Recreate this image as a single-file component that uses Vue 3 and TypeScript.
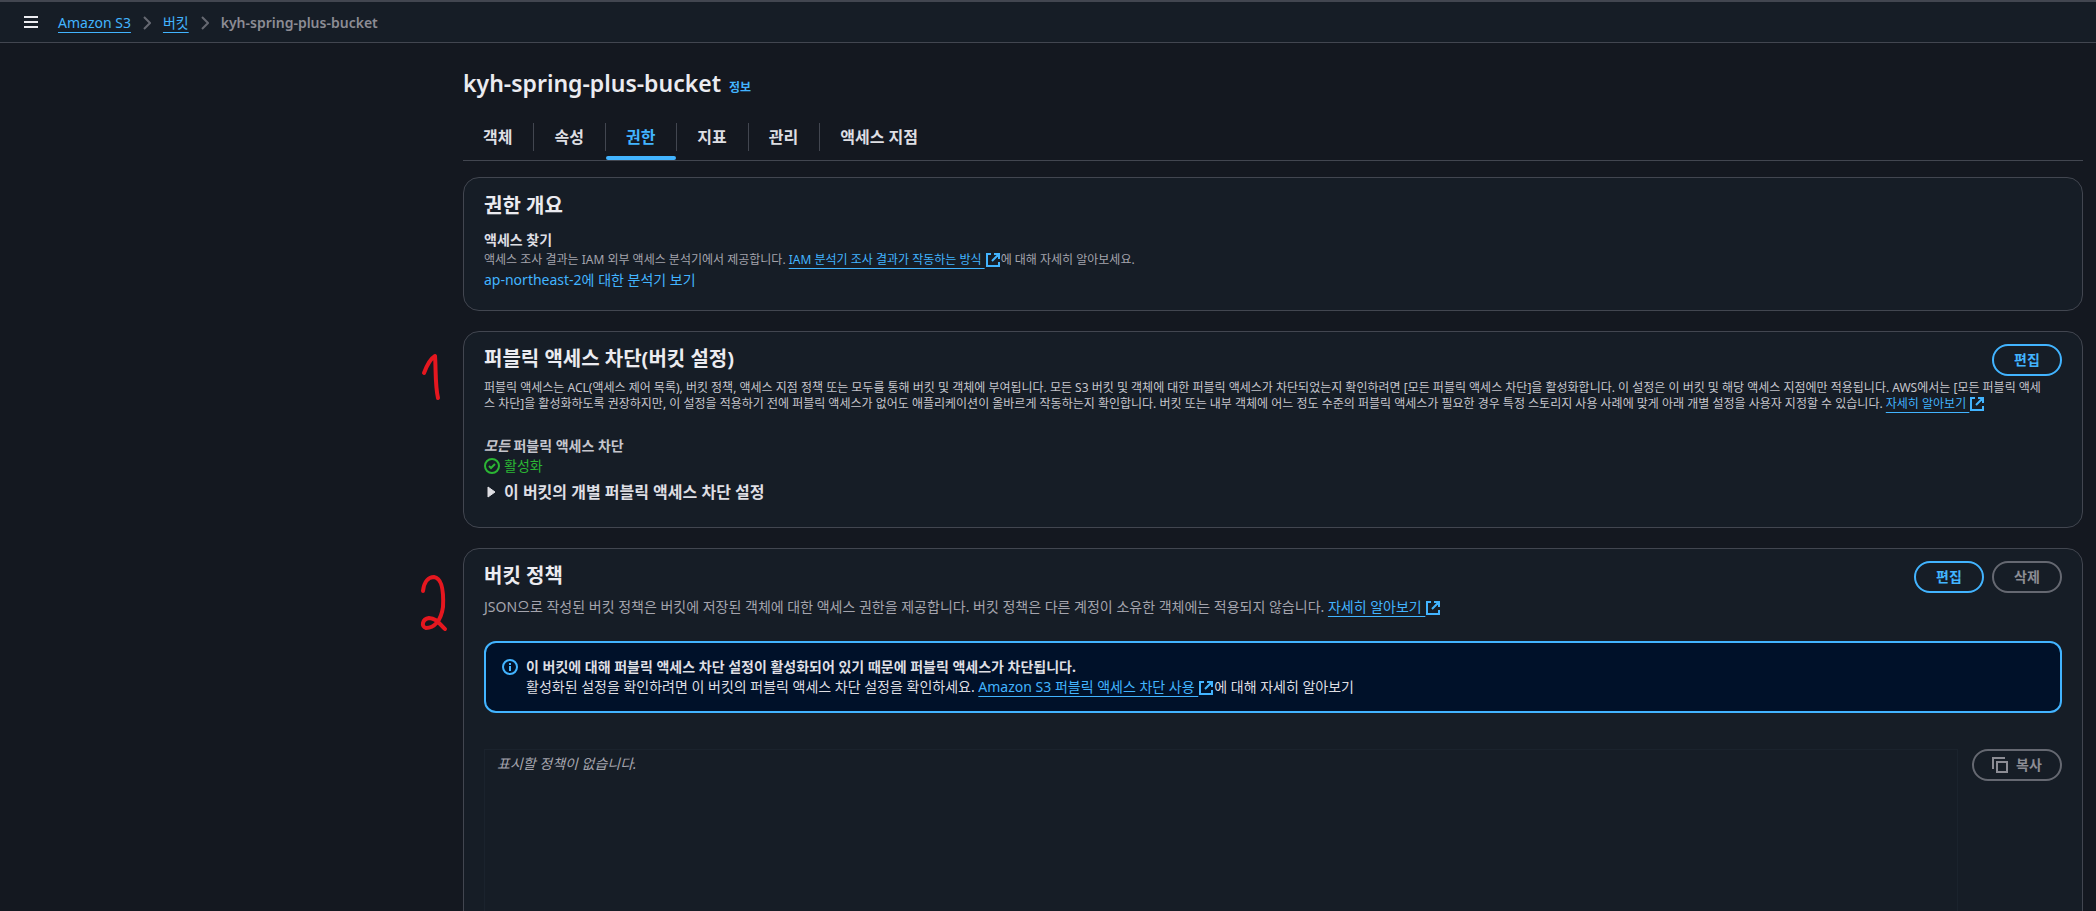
<script setup lang="ts">
import { h, ref } from 'vue'

const tabs = ['객체', '속성', '권한', '지표', '관리', '액세스 지점']
const activeTab = ref('권한')

const ExternalIcon = () =>
  h('svg', { viewBox: '0 0 16 16', class: 'external-icon', 'aria-hidden': 'true' }, [
    h('path', { d: 'M6 2H2v12h12v-4M9 2h5v5M14 2 7 9', fill: 'none', stroke: 'currentColor', 'stroke-width': 2 }),
  ])
</script>

<template>
  <div class="app">
    <header class="topbar">
      <button class="menu" type="button" aria-label="메뉴">
        <svg viewBox="0 0 14 12" width="14" height="12"><path d="M0 1h14M0 6h14M0 11h14" stroke="currentColor" stroke-width="2" /></svg>
      </button>
      <nav class="crumbs" aria-label="탐색 경로">
        <a class="link" href="#">Amazon S3</a>
        <svg class="chevron" viewBox="0 0 8 14"><path d="m1 1 6 6-6 6" /></svg>
        <a class="link" href="#">버킷</a>
        <svg class="chevron" viewBox="0 0 8 14"><path d="m1 1 6 6-6 6" /></svg>
        <span class="current">kyh-spring-plus-bucket</span>
      </nav>
    </header>

    <main class="content">
      <div class="title">
        <h1>kyh-spring-plus-bucket</h1>
        <a href="#" class="info">정보</a>
      </div>

      <div class="tabs" role="tablist">
        <div v-for="tab in tabs" :key="tab" class="tab-item" :class="{ active: tab === activeTab }">
          <button type="button" role="tab" :aria-selected="tab === activeTab" @click="activeTab = tab">{{ tab }}</button>
        </div>
      </div>

      <section class="card overview">
        <h2>권한 개요</h2>
        <h3>액세스 찾기</h3>
        <p class="small muted">액세스 조사 결과는 IAM 외부 액세스 분석기에서 제공합니다. <a class="link" href="#">IAM 분석기 조사 결과가 작동하는 방식&nbsp;</a><ExternalIcon />에 대해 자세히 알아보세요.</p>
        <a class="plain" href="#">ap-northeast-2에 대한 분석기 보기</a>
      </section>

      <section class="card access">
        <svg class="mark" viewBox="0 0 50 75"><path d="M14 33 C17 25 20 19 25 16 C26 29 25 45 28 58" /></svg>
        <div class="card-head">
          <h2>퍼블릭 액세스 차단(버킷 설정)</h2>
          <button class="btn" type="button">편집</button>
        </div>
        <p class="small">퍼블릭 액세스는 ACL(액세스 제어 목록), 버킷 정책, 액세스 지점 정책 또는 모두를 통해 버킷 및 객체에 부여됩니다. 모든 S3 버킷 및 객체에 대한 퍼블릭 액세스가 차단되었는지 확인하려면 [모든 퍼블릭 액세스 차단]을 활성화합니다. 이 설정은 이 버킷 및 해당 액세스 지점에만 적용됩니다. AWS에서는 [모든 퍼블릭 액세스 차단]을 활성화하도록 권장하지만, 이 설정을 적용하기 전에 퍼블릭 액세스가 없어도 애플리케이션이 올바르게 작동하는지 확인합니다. 버킷 또는 내부 객체에 어느 정도 수준의 퍼블릭 액세스가 필요한 경우 특정 스토리지 사용 사례에 맞게 아래 개별 설정을 사용자 지정할 수 있습니다. <a class="link" href="#">자세히 알아보기&nbsp;</a><ExternalIcon /></p>
        <div class="label"><em>모든</em> 퍼블릭 액세스 차단</div>
        <div class="status">
          <svg viewBox="0 0 16 16" width="16" height="16"><circle cx="8" cy="8" r="7" /><path d="m5 8 2 2 4-4" /></svg>
          <span>활성화</span>
        </div>
        <button class="expander" type="button" aria-expanded="false">
          <svg viewBox="0 0 9 12" width="9" height="12"><path d="M1 1v10l7-5z" fill="currentColor" stroke="currentColor" stroke-linejoin="round" /></svg>
          <span>이 버킷의 개별 퍼블릭 액세스 차단 설정</span>
        </button>
      </section>

      <section class="card policy">
        <svg class="mark" viewBox="0 0 50 75"><path d="M13 26 C14 16 19 12 24 12 C31 13 34 22 33 42 C31 56 24 63 16 63 C11 62 12 54 19 53 C27 53 30 60 35 64" /></svg>
        <div class="card-head">
          <h2>버킷 정책</h2>
          <div class="actions">
            <button class="btn" type="button">편집</button>
            <button class="btn" type="button" disabled>삭제</button>
          </div>
        </div>
        <p class="muted desc">JSON으로 작성된 버킷 정책은 버킷에 저장된 객체에 대한 액세스 권한을 제공합니다. 버킷 정책은 다른 계정이 소유한 객체에는 적용되지 않습니다. <a class="link" href="#">자세히 알아보기&nbsp;</a><ExternalIcon /></p>

        <div class="alert">
          <svg viewBox="0 0 16 16" width="16" height="16"><circle cx="8" cy="8" r="7" /><path d="M8 7v5M8 4v2" /></svg>
          <div>
            <strong>이 버킷에 대해 퍼블릭 액세스 차단 설정이 활성화되어 있기 때문에 퍼블릭 액세스가 차단됩니다.</strong>
            <p>활성화된 설정을 확인하려면 이 버킷의 퍼블릭 액세스 차단 설정을 확인하세요. <a class="link" href="#">Amazon S3 퍼블릭 액세스 차단 사용&nbsp;</a><ExternalIcon />에 대해 자세히 알아보기</p>
          </div>
        </div>

        <div class="policy-body">
          <div class="editor"><em>표시할 정책이 없습니다.</em></div>
          <button class="btn copy" type="button" disabled>
            <svg viewBox="0 0 16 16" width="16" height="16"><path d="M1 12V1h12M5 5h10v10H5z" /></svg>
            <span>복사</span>
          </button>
        </div>
      </section>
    </main>
  </div>
</template>

<style>
body {
  background: #141820;
}
</style>

<style scoped>
.app {
  height: 100vh;
  overflow: hidden;
  background: #141820;
  color: #c6c6cd;
  font: 14px/20px 'Noto Sans', 'Noto Sans CJK KR', sans-serif;
}
h1, h2, h3, p { margin: 0; }
button {
  font: inherit;
  color: inherit;
  background: none;
  border: 0;
  padding: 0;
}
a {
  color: #42b4ff;
  text-decoration: none;
}
.link {
  text-decoration: underline 1px;
  text-underline-offset: 4px;
  text-decoration-skip-ink: none;
}
.topbar {
  display: flex;
  align-items: center;
  height: 40px;
  padding-left: 24px;
  background: #161d26;
  border-top: 2px solid #424650;
  border-bottom: 1px solid #424650;
}
.menu {
  display: flex;
  margin-right: 20px;
  color: #ebebf0;
}
.crumbs {
  display: flex;
  align-items: center;
  gap: 12px;
  padding-top: 2px;
}
.chevron {
  width: 8px;
  height: 14px;
  fill: none;
  stroke: #656871;
  stroke-width: 2;
}
.current {
  color: #8c8c94;
  font-weight: 600;
}
.content {
  padding: 25px 13px 0 463px;
}
.title {
  display: flex;
  align-items: baseline;
  gap: 8px;
  color: #ebebf0;
}
h1 {
  font-size: 23px;
  font-weight: 600;
  line-height: 30px;
}
.info {
  font-size: 12px;
  font-weight: 700;
}
.tabs {
  display: flex;
  margin-top: 16px;
  height: 46px;
  border-bottom: 1px solid #424650;
}
.tab-item {
  position: relative;
  height: 28px;
  margin-top: 9px;
  padding: 0 21px 0 20px;
  border-right: 1px solid #424650;
}
.tab-item:last-child { border-right: 0; }
.tab-item button {
  font-size: 16px;
  line-height: 28px;
  font-weight: 700;
  color: #dedee3;
}
.tab-item.active button { color: #42b4ff; }
.tab-item.active::after {
  content: '';
  position: absolute;
  left: 0;
  right: 0;
  bottom: -9px;
  height: 4px;
  border-radius: 2px;
  background: #42b4ff;
}
.card {
  position: relative;
  margin-bottom: 20px;
  padding: 12px 20px 20px;
  background: #161d26;
  border: 1px solid #424650;
  border-radius: 16px;
}
h2 {
  color: #ebebf0;
  font-size: 20px;
  line-height: 24px;
}
h3 {
  color: #dedee3;
  font-size: 14px;
  line-height: 20px;
}
.small {
  font-size: 12px;
  line-height: 16px;
}
.muted { color: #a4a4ad; }
.external-icon {
  display: inline-block;
  width: 16px;
  height: 16px;
  margin: -1px 0;
  color: #42b4ff;
  vertical-align: -3px;
}
.overview {
  margin-top: 16px;
  padding-top: 16px;
}
.overview h3 { margin-top: 12px; }
.overview p { line-height: 20px; }
.card-head {
  display: flex;
  justify-content: space-between;
}
.card-head h2 { padding-top: 3px; }
.access { padding-bottom: 23px; }
.access p {
  margin-top: 4px;
  padding-right: 16px;
}
.actions {
  display: flex;
  gap: 8px;
}
.btn {
  min-width: 70px;
  height: 32px;
  color: #42b4ff;
  font-weight: 700;
  border: 2px solid currentColor;
  border-radius: 16px;
}
.btn:disabled {
  color: #8c8c94;
  border-color: #656871;
}
.label {
  margin-top: 24px;
  font-weight: 700;
}
.status {
  display: flex;
  align-items: center;
  gap: 4px;
  color: #2bb534;
}
svg circle, .status path, .alert path, .copy path, .mark path {
  fill: none;
  stroke: currentColor;
  stroke-width: 2;
}
.external-icon path { fill: none; }
.expander {
  display: flex;
  align-items: center;
  gap: 8px;
  margin-top: 4px;
  padding-left: 3px;
  color: #dedee3;
  font-size: 16px;
  font-weight: 700;
  line-height: 24px;
}
.mark {
  position: absolute;
  left: -54px;
  top: 8px;
  width: 50px;
  color: #e5171f;
}
.mark path {
  stroke-width: 4;
  stroke-linecap: round;
  stroke-linejoin: round;
}
.policy .mark { top: 16px; }
.desc { margin-top: 4px; }
.alert {
  display: flex;
  gap: 8px;
  margin-top: 24px;
  padding: 14px 16px;
  color: #dedee3;
  background: #001129;
  border: 2px solid #42b4ff;
  border-radius: 12px;
}
.alert > svg {
  margin-top: 2px;
  color: #42b4ff;
}
.alert strong { display: block; }
.policy-body {
  display: flex;
  align-items: flex-start;
  gap: 14px;
  margin-top: 36px;
}
.editor {
  flex: 1;
  min-height: 320px;
  padding: 4px 12px;
  border: 1px solid #1b232d;
  color: #a4a4ad;
}
.copy {
  display: flex;
  align-items: center;
  justify-content: center;
  gap: 8px;
  min-width: 90px;
}
</style>
